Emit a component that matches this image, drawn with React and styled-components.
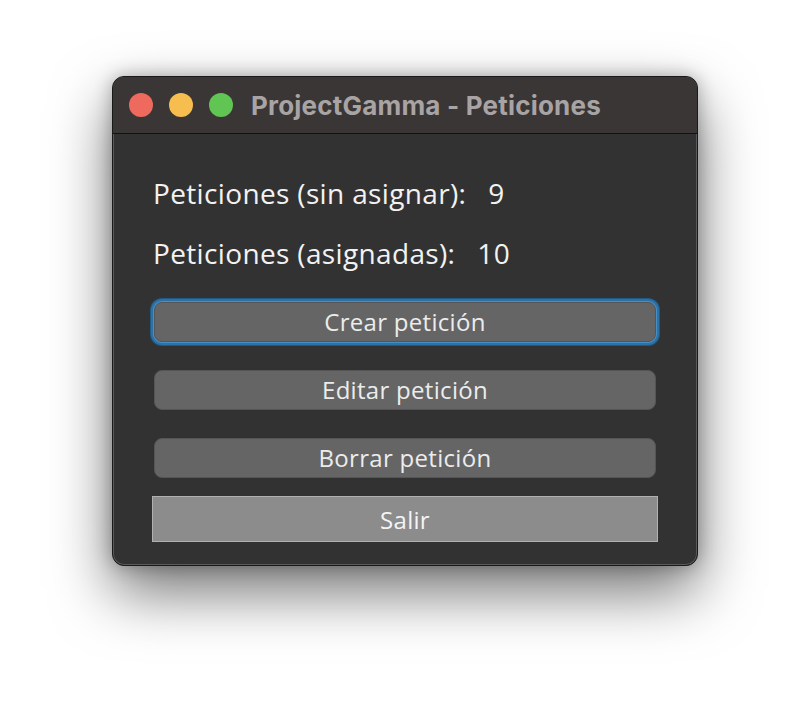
import React from "react";
import styled, { createGlobalStyle } from "styled-components";

const GlobalStyle = createGlobalStyle`
  html, body {
    margin: 0;
    padding: 0;
    background: #ffffff;
  }
`;

const Page = styled.div`
  width: 810px;
  height: 714px;
  display: flex;
  justify-content: center;
  align-items: flex-start;
  padding-top: 76px;
  box-sizing: border-box;
`;

const Window = styled.div`
  width: 586px;
  height: 490px;
  border-radius: 12px;
  background: #323232;
  border: 1px solid #1a1a1a;
  box-shadow: 0 0 0 1px #5a5a5a inset, 0 26px 60px rgba(0, 0, 0, 0.55),
    0 0 18px rgba(0, 0, 0, 0.28);
  box-sizing: border-box;
  overflow: hidden;
  display: flex;
  flex-direction: column;
`;

const TitleBar = styled.div`
  height: 56px;
  flex-shrink: 0;
  background: #3b3636;
  border-bottom: 1px solid #111;
  display: flex;
  align-items: center;
  padding-left: 16px;
  gap: 16px;
`;

const Lights = styled.div`
  display: flex;
  gap: 16px;
`;

const Light = styled.span`
  width: 24px;
  height: 24px;
  border-radius: 50%;
  background: ${(props) => props.color};
`;

const Title = styled.h1`
  margin: 0 0 0 2px;
  font-family: "Inter", "Liberation Sans", sans-serif;
  font-weight: 700;
  font-size: 26px;
  letter-spacing: 0.2px;
  color: #a9a4a4;
`;

const Body = styled.div`
  padding: 40px 40px 0 40px;
  display: flex;
  flex-direction: column;
`;

const StatRow = styled.div`
  display: flex;
  align-items: baseline;
  gap: 22px;
  height: 60px;
  font-family: "Open Sans", "Liberation Sans", sans-serif;
  font-size: 28px;
  letter-spacing: 0.35px;
  color: #f2f2f2;
`;

const Buttons = styled.div`
  display: flex;
  flex-direction: column;
  margin-top: 8px;
`;

const RoundButton = styled.button`
  box-sizing: border-box;
  width: 502px;
  height: 40px;
  margin: 0 0 28px 1px;
  border: 1px solid #555;
  border-radius: 8px;
  background: #656565;
  color: #ececec;
  font-family: "Open Sans", "Liberation Sans", sans-serif;
  font-size: 24px;
  letter-spacing: 0.3px;
  padding: 0 0 2px;
  box-shadow: ${(props) =>
    props.focused
      ? "0 0 0 1px #4a8fc4, 0 0 0 3px #2a72a8, 0 0 0 4px #1f5a85"
      : "none"};
`;

const FlatButton = styled.button`
  box-sizing: border-box;
  width: 506px;
  height: 46px;
  margin: -10px 0 0 -1px;
  border: 1px solid #b0b0b0;
  border-radius: 0;
  background: #8c8c8c;
  color: #f4f4f4;
  font-family: "Open Sans", "Liberation Sans", sans-serif;
  font-size: 24px;
  letter-spacing: 0.3px;
`;

export default function App() {
  return (
    <>
      <GlobalStyle />
      <Page>
        <Window>
          <TitleBar>
            <Lights>
              <Light color="#ee6a5f" />
              <Light color="#f5be4f" />
              <Light color="#61c554" />
            </Lights>
            <Title>ProjectGamma - Peticiones</Title>
          </TitleBar>
          <Body>
            <StatRow>
              <span>Peticiones (sin asignar):</span>
              <span>9</span>
            </StatRow>
            <StatRow>
              <span>Peticiones (asignadas):</span>
              <span>10</span>
            </StatRow>
            <Buttons>
              <RoundButton focused>Crear petición</RoundButton>
              <RoundButton>Editar petición</RoundButton>
              <RoundButton>Borrar petición</RoundButton>
              <FlatButton>Salir</FlatButton>
            </Buttons>
          </Body>
        </Window>
      </Page>
    </>
  );
}
